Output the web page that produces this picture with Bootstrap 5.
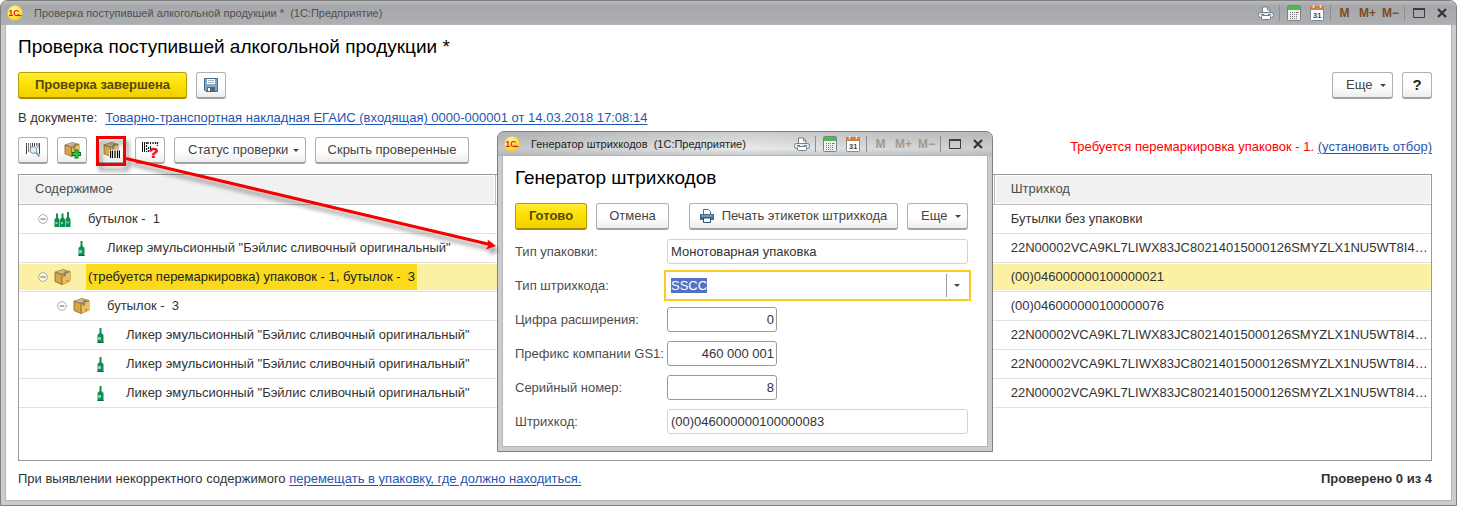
<!DOCTYPE html>
<html lang="ru">
<head>
<meta charset="utf-8">
<meta name="viewport" content="width=device-width, initial-scale=1">
<title>Проверка поступившей алкогольной продукции</title>
<link href="https://cdn.jsdelivr.net/npm/bootstrap@5.3.0/dist/css/bootstrap.min.css" rel="stylesheet">
<style>
  body { font-family: "Liberation Sans", Arial, sans-serif; font-size: 13px; line-height: 20px; color: #333; background: #fff; }
  a { color: #1f56b3; text-underline-offset: 2px; }
  svg { display: block; flex: none; }

  /* windows */
  .win { border: 1px solid #808080; border-radius: 7px 7px 0 0; background: #cbcccd; padding: 0 5px 5px; }
  .win-bar { height: 24px; margin: 0 -5px; padding: 0 3px 0 6px; border-radius: 6px 6px 0 0; background: linear-gradient(#b9babc, #a6a8ab 5px, #adafb2); font-size: 11px; color: #505050; }
  .win-bar .caption { margin-left: 11px; }
  .win-body { background: #fff; padding: 10px 19px 11px 12px; box-shadow: 0 0 0 1px #b4b5b6; }
  .win-title { font-size: 19px; line-height: 24px; color: #000; margin: 0 0 13px; font-weight: 400; }
  .tool { width: 23px; height: 22px; padding: 0; border: 0; background: none; display: flex; align-items: center; justify-content: center; font-size: 12px; font-weight: 700; color: #7d4a1e; }
  .bar-sep { width: 1px; height: 16px; margin: 0 2px; background: #8b8d90; }

  /* buttons */
  .btn-c { height: 27px; padding: 0; font-size: 13px; line-height: 20px; color: #444; border: 1px solid #b0b0b0; border-bottom: 2px solid #a2a2a2; border-radius: 3px; background: linear-gradient(#fff 55%, #ededed); display: inline-flex; align-items: center; justify-content: center; gap: 8px; white-space: nowrap; }
  .btn-main { font-weight: 700; color: #54490f; border-color: #b99f00; border-bottom-color: #a48d00; background: linear-gradient(#ffec33, #fddf00 50%, #f1d000); }
  .btn-drop { padding: 0 6px 0 13px; gap: 5px; justify-content: space-between; }
  .btn-more { width: 61px; }
  .btn-sq { width: 30px; }
  .btn-help { font-size: 15px; font-weight: 700; color: #222; }
  .caret { width: 0; height: 0; border: 3px solid transparent; border-top-color: #444; border-bottom: 0; }
  .gap-c { gap: 9px; }

  /* content tree */
  .grid-box { border: 1px solid #999; margin-top: 10px; }
  .tree { width: 100%; table-layout: fixed; border-collapse: separate; border-spacing: 0; }
  .tree th { height: 30px; padding: 0 16px 2px; font-weight: 400; color: #4d4d4d; background: #f1f1f1; border-bottom: 1px solid #bdbdbd; border-right: 1px solid #bdbdbd; box-shadow: inset 0 0 0 1px #fff; }
  .tree th:last-child { border-right: 0; }
  .tree td { height: 29px; padding: 0 16px; border-bottom: 1px solid #e0e0e0; white-space: nowrap; overflow: hidden; }
  .tree td:first-child { padding-left: 19px; }
  .tree .picked td { background: #fcf0a4; box-shadow: inset 0 1px #fff, inset 0 -1px #fff; }
  .node { display: flex; align-items: center; height: 26px; }
  .lvl-1 { margin-left: 19px; }
  .lvl-2 { margin-left: 38px; }
  .toggle { width: 10px; height: 10px; padding: 0; border: 0; background: none; margin-right: 6px; }
  .node-text { margin-left: 15px; padding: 3px 2px; white-space: pre; }
  .picked .node-text { background: #fbd91b; color: #222; }
  .warn { color: #f00; }

  /* generator dialog */
  .dialog { position: absolute; left: 497px; top: 131px; width: 496px; }
  .dialog .win-bar { color: #1e1e1e; background: linear-gradient(180deg, #a9abad88, #dcddde66 70%, #b0b2b4aa), linear-gradient(90deg, #b3b5b7, #f2f2f2 50%, #c3c4c6); }
  .dialog .tool-m { color: #a8978a; }
  .dialog .win-body { padding-bottom: 12px; }
  .fields { display: grid; grid-template-columns: 152px 1fr; row-gap: 9px; margin-top: 9px; align-items: center; }
  .fields label { color: #4d4d4d; white-space: nowrap; }
  .fld { height: 25px; width: 100%; padding: 0 3px; font-size: 13px; line-height: 15px; color: #333; border: 1px solid #999; border-radius: 3px; background: #fff; outline: 0; }
  .fld[readonly] { border-color: #d2d2d2; }
  .fld-num { width: 110px; text-align: right; padding-right: 2px; }
  .combo { margin: -3px; height: 31px; border: 2px solid #fbcb1d; display: flex; align-items: center; background: #fff; }
  .combo input { flex: 1; min-width: 0; border: 0; outline: 0; padding: 0 0 0 5px; color: #333; line-height: 15px; caret-color: transparent; }
  .combo input::selection { background: #5670c2; color: #fff; }
  .combo button { width: 23px; height: 23px; border: 0; border-left: 1px solid #999; background: none; padding: 0 3px 0 0; display: flex; align-items: center; justify-content: center; }
  .callout { position: absolute; left: 0; top: 0; pointer-events: none; }
</style>
</head>
<body>
<svg width="0" height="0" class="position-absolute" aria-hidden="true">
  <defs>
    <radialGradient id="sun" cx=".4" cy=".3" r=".8"><stop offset="0" stop-color="#fff9a0"/><stop offset=".6" stop-color="#ffe33c"/><stop offset="1" stop-color="#f0b92a"/></radialGradient>
    <symbol id="i-logo" viewBox="0 0 16 16"><circle cx="8" cy="8" r="7.6" fill="url(#sun)"/><text x="1.500" y="11" font-family="Liberation Sans" font-size="8.500" font-weight="700" fill="#e3211b">1С</text><path d="M9.500 10.500h5" stroke="#e3211b" stroke-width="1.200"/></symbol>
    <symbol id="i-print" viewBox="0 0 16 14"><path d="M4.500 7V1h5l2.500 2.500V7" fill="#fff" stroke="#6d7f8b"/><path d="M9.500 1v3H12" fill="none" stroke="#6d7f8b"/><rect x=".5" y="6.500" width="15" height="5" rx="2" fill="#e9eef1" stroke="#6d7f8b"/><rect x="3.500" y="9.500" width="9" height="4" rx="1" fill="#fff" stroke="#6d7f8b"/><path d="M3 8.500h3M10 8.500h3" stroke="#6d7f8b"/></symbol>
    <symbol id="i-calc" viewBox="0 0 14 16"><rect x=".5" y=".5" width="13" height="15" rx="1" fill="#f2f2f2" stroke="#7b8287"/><path d="M1 1h12v4H1z" fill="#4cbb4f"/><path d="M3 7.500h8M3 9.500h8M3 11.500h8M3 13.500h8" stroke="#777" stroke-dasharray="1 1"/><path d="M10 7.500h1.500" stroke="#e33"/></symbol>
    <symbol id="i-cal" viewBox="0 0 14 16"><rect x=".5" y="1.500" width="13" height="14" rx="1" fill="#fff" stroke="#7b8b96"/><path d="M0 1h14v4H0z" fill="#c9824a"/><path d="M3.500 0v3M10.500 0v3" stroke="#f7e3d2" stroke-width="1.500"/><text x="3" y="13" font-family="Liberation Sans" font-size="7.500" fill="#444">31</text></symbol>
    <symbol id="i-max" viewBox="0 0 12 10"><path d="M.5 1h11v8.500H.5z" fill="none" stroke="#3d3d3d"/><path d="M0 1h12" stroke="#3d3d3d" stroke-width="2"/></symbol>
    <symbol id="i-close" viewBox="0 0 10 10"><path d="M1 1l8 8M9 1L1 9" stroke="#333" stroke-width="2.200"/></symbol>
    <symbol id="i-save" viewBox="0 0 14 14"><path d="M.5.5h13v13H2L.5 12z" fill="#7fa8cc" stroke="#43698b"/><path d="M3 1h8v5H3z" fill="#fff"/><path d="M4 2.500h6M4 4.500h6" stroke="#a8b6c2"/><path d="M3 9h8v4.500H3z" fill="#5a646c"/><path d="M4 10h2v3H4z" fill="#fff"/></symbol>
    <symbol id="i-scan" viewBox="0 0 16 16"><path d="M1.500 1v11M7.500 1v5M9.500 1v3M14.500 1v11" stroke="#444"/><path d="M3.500 1v9M5.500 1v9M11.500 1v3M13 1v5" stroke="#777"/><circle cx="8.500" cy="8" r="3.500" fill="#d8eaf6" fill-opacity=".85" stroke="#7796ab"/><path d="M11 10.500l3.500 4" stroke="#8aa" stroke-width="2"/></symbol>
    <symbol id="i-box" viewBox="0 0 17 16"><path d="M1 3.200L9 .5l7 2v9.500L8 15.500 1 12.500z" fill="#dba63f" stroke="#7a6242" stroke-width=".8"/><path d="M1 3.200L9 .5l7 2-8 3z" fill="#cbb592"/><path d="M8 5.500l8-3V12l-8 3.500z" fill="#eec057"/><path d="M1 3.200l7 2.300 8-3M8 5.500v10" fill="none" stroke="#7a5a26" stroke-width=".8"/><path d="M9 1.200l2 .7-1.500 3v3.200l2.500-1V4l2-1.600z" fill="#8d8171"/><path d="M12.500 12l1.500-.6" stroke="#8c5f1d"/></symbol>
    <symbol id="i-boxadd" viewBox="0 0 17 17"><use href="#i-box" width="16" height="15"/><path d="M8 12h9M12.500 7.500v9" stroke="#0c7a1c" stroke-width="4"/><path d="M9 12h7M12.500 8.500v7" stroke="#35c443" stroke-width="2.200"/></symbol>
    <symbol id="i-boxcode" viewBox="0 0 17 17"><use href="#i-box" width="16" height="15"/><path d="M6 8h11v8H6z" fill="#fff"/><path d="M7.500 8.500V16M9.500 8.500V16M12 8.500V16M14.500 8.500V16M16.500 8.500V16" stroke="#000" stroke-width="1.200"/></symbol>
    <symbol id="i-codeq" viewBox="0 0 17 16"><path d="M.5 0v10M2.500 0v10M8.500 0v2M8.500 4v5" stroke="#111"/><path d="M4.500 0v10M6 0v3M6.500 5v5M11 0v3M13.500 0v2M15.500 0v4" stroke="#222" stroke-width="1.300" stroke-dasharray="2 1"/><text x="7" y="15.500" font-family="Liberation Sans" font-size="15.500" font-weight="700" fill="#f20d16" stroke="#f20d16" stroke-width=".6">?</text></symbol>
    <symbol id="i-printer" viewBox="0 0 14 14"><path d="M3.500 5V.5h5l2 2V5" fill="#fff" stroke="#4a6f8c"/><path d="M0 5h14v6H0z" fill="#476d8c"/><path d="M1.500 7h11" stroke="#a9c1d3"/><path d="M3.500 9h7v4.500h-7z" fill="#fff" stroke="#2f5069"/></symbol>
    <symbol id="i-bottle" viewBox="0 0 7 15"><path d="M2.500 0h2v5L6.500 7v8H.5V7l2-2z" fill="#0e8f52"/><path d="M1 9h3v3H1z" fill="#8ccdae"/><path d="M.5 14h6v1h-6z" fill="#086b3a"/></symbol>
    <symbol id="i-bottles" viewBox="0 0 16 15"><path d="M1.500 1.500h2v4L5 7.500V15H0V7.500l1.500-2zM7 1.500h2v4l1.500 2V15h-5V7.500l1.500-2zM12.500 0h2v5L16 7v8h-5V7l1.500-2z" fill="#0e8f52"/><path d="M1 10h2v2H1zM6.500 10h2v2h-2zM12 9.500h2v2h-2z" fill="#8ccdae"/></symbol>
    <symbol id="i-minus" viewBox="0 0 10 10"><circle cx="5" cy="5" r="4.400" fill="#fff" fill-opacity=".6" stroke="#999" stroke-width=".8"/><path d="M2.500 5h5" stroke="#666"/></symbol>
  </defs>
</svg>

<div class="win d-flex flex-column min-vh-100">
  <header class="win-bar d-flex align-items-center">
    <svg width="16" height="16"><use href="#i-logo"/></svg>
    <span class="caption me-auto">Проверка поступившей алкогольной продукции *&nbsp; (1С:Предприятие)</span>
    <button class="tool" aria-label="Печать"><svg width="16" height="14"><use href="#i-print"/></svg></button>
    <span class="bar-sep"></span>
    <button class="tool" aria-label="Калькулятор"><svg width="14" height="16"><use href="#i-calc"/></svg></button>
    <button class="tool" aria-label="Календарь"><svg width="14" height="16"><use href="#i-cal"/></svg></button>
    <span class="bar-sep"></span>
    <button class="tool tool-m">M</button>
    <button class="tool tool-m">M+</button>
    <button class="tool tool-m">M−</button>
    <span class="bar-sep"></span>
    <button class="tool" aria-label="Развернуть"><svg width="12" height="10"><use href="#i-max"/></svg></button>
    <button class="tool" aria-label="Закрыть"><svg width="10" height="10"><use href="#i-close"/></svg></button>
  </header>

  <main class="win-body flex-grow-1 d-flex flex-column">
    <h1 class="win-title">Проверка поступившей алкогольной продукции *</h1>
    <div class="d-flex gap-c">
      <button class="btn btn-c btn-main" style="width:169px">Проверка завершена</button>
      <button class="btn btn-c btn-sq me-auto" aria-label="Сохранить"><svg width="14" height="14"><use href="#i-save"/></svg></button>
      <button class="btn btn-c btn-drop btn-more">Еще <span class="caret"></span></button>
      <button class="btn btn-c btn-sq btn-help">?</button>
    </div>
    <div class="gap-2 d-flex" style="margin-top:9px">
      <span>В документе:</span>
      <a href="#">Товарно-транспортная накладная ЕГАИС (входящая) 0000-000001 от 14.03.2018 17:08:14</a>
    </div>
    <div class="d-flex gap-c" style="margin-top:9px">
      <button class="btn btn-c btn-sq" aria-label="Поиск по штрихкоду"><svg width="16" height="16"><use href="#i-scan"/></svg></button>
      <button class="btn btn-c btn-sq" aria-label="Добавить упаковку"><svg width="17" height="17"><use href="#i-boxadd"/></svg></button>
      <button class="btn btn-c btn-sq" aria-label="Генератор штрихкодов"><svg width="17" height="17"><use href="#i-boxcode"/></svg></button>
      <button class="btn btn-c btn-sq" aria-label="Неизвестный штрихкод"><svg width="17" height="16"><use href="#i-codeq"/></svg></button>
      <button class="btn btn-c btn-drop" style="width:132px">Статус проверки <span class="caret"></span></button>
      <button class="btn btn-c" style="width:154px">Скрыть проверенные</button>
      <span class="ms-auto warn">Требуется перемаркировка упаковок - 1. <a href="#">(установить отбор)</a></span>
    </div>

    <div class="grid-box flex-grow-1">
      <table class="tree">
        <colgroup><col style="width:33.8%"><col><col style="width:30.9%"></colgroup>
        <thead><tr><th>Содержимое</th><th></th><th>Штрихкод</th></tr></thead>
        <tbody>
          <tr><td><div class="node"><button class="toggle" aria-label="Свернуть"><svg width="10" height="10"><use href="#i-minus"/></svg></button><svg width="17" height="15"><use href="#i-bottles"/></svg><span class="node-text">бутылок -  1</span></div></td><td></td><td>Бутылки без упаковки</td></tr>
          <tr><td><div class="node lvl-1"><span class="toggle"></span><svg width="17" height="15"><use href="#i-bottle"/></svg><span class="node-text">Ликер эмульсионный "Бэйлис сливочный оригинальный"</span></div></td><td></td><td>22N00002VCA9KL7LIWX83JC80214015000126SMYZLX1NU5WT8I4…</td></tr>
          <tr class="picked"><td><div class="node"><button class="toggle" aria-label="Свернуть"><svg width="10" height="10"><use href="#i-minus"/></svg></button><svg width="17" height="16"><use href="#i-box"/></svg><span class="node-text">(требуется перемаркировка) упаковок - 1, бутылок -  3</span></div></td><td></td><td>(00)046000000100000021</td></tr>
          <tr><td><div class="node lvl-1"><button class="toggle" aria-label="Свернуть"><svg width="10" height="10"><use href="#i-minus"/></svg></button><svg width="17" height="16"><use href="#i-box"/></svg><span class="node-text">бутылок -  3</span></div></td><td></td><td>(00)046000000100000076</td></tr>
          <tr><td><div class="node lvl-2"><span class="toggle"></span><svg width="17" height="15"><use href="#i-bottle"/></svg><span class="node-text">Ликер эмульсионный "Бэйлис сливочный оригинальный"</span></div></td><td></td><td>22N00002VCA9KL7LIWX83JC80214015000126SMYZLX1NU5WT8I4…</td></tr>
          <tr><td><div class="node lvl-2"><span class="toggle"></span><svg width="17" height="15"><use href="#i-bottle"/></svg><span class="node-text">Ликер эмульсионный "Бэйлис сливочный оригинальный"</span></div></td><td></td><td>22N00002VCA9KL7LIWX83JC80214015000126SMYZLX1NU5WT8I4…</td></tr>
          <tr><td><div class="node lvl-2"><span class="toggle"></span><svg width="17" height="15"><use href="#i-bottle"/></svg><span class="node-text">Ликер эмульсионный "Бэйлис сливочный оригинальный"</span></div></td><td></td><td>22N00002VCA9KL7LIWX83JC80214015000126SMYZLX1NU5WT8I4…</td></tr>
        </tbody>
      </table>
    </div>

    <footer class="d-flex justify-content-between mt-2">
      <span>При выявлении некорректного содержимого <a href="#">перемещать в упаковку, где должно находиться.</a></span>
      <strong>Проверено 0 из 4</strong>
    </footer>
  </main>
</div>

<section class="win dialog" role="dialog" aria-label="Генератор штрихкодов">
  <header class="win-bar d-flex align-items-center">
    <svg width="16" height="16"><use href="#i-logo"/></svg>
    <span class="caption me-auto">Генератор штрихкодов&nbsp; (1С:Предприятие)</span>
    <button class="tool" aria-label="Печать"><svg width="16" height="14"><use href="#i-print"/></svg></button>
    <span class="bar-sep"></span>
    <button class="tool" aria-label="Калькулятор"><svg width="14" height="16"><use href="#i-calc"/></svg></button>
    <button class="tool" aria-label="Календарь"><svg width="14" height="16"><use href="#i-cal"/></svg></button>
    <span class="bar-sep"></span>
    <button class="tool tool-m">M</button>
    <button class="tool tool-m">M+</button>
    <button class="tool tool-m">M−</button>
    <span class="bar-sep"></span>
    <button class="tool" aria-label="Развернуть"><svg width="12" height="10"><use href="#i-max"/></svg></button>
    <button class="tool" aria-label="Закрыть"><svg width="10" height="10"><use href="#i-close"/></svg></button>
  </header>
  <div class="win-body">
    <h2 class="win-title">Генератор штрихкодов</h2>
    <div class="d-flex gap-c">
      <button class="btn btn-c btn-main" style="width:72px">Готово</button>
      <button class="btn btn-c me-auto" style="width:73px">Отмена</button>
      <button class="btn btn-c" style="width:209px"><svg width="14" height="14"><use href="#i-printer"/></svg>Печать этикеток штрихкода</button>
      <button class="btn btn-c btn-drop btn-more">Еще <span class="caret"></span></button>
    </div>
    <div class="fields">
      <label for="f-pack">Тип упаковки:</label><input id="f-pack" class="fld" readonly value="Монотоварная упаковка">
      <label for="f-kind">Тип штрихкода:</label>
      <div class="combo"><input id="f-kind" value="SSCC"><button aria-label="Выбрать"><span class="caret"></span></button></div>
      <label for="f-ext">Цифра расширения:</label><input id="f-ext" class="fld fld-num" value="0">
      <label for="f-gs">Префикс компании GS1:</label><input id="f-gs" class="fld fld-num" value="460 000 001">
      <label for="f-ser">Серийный номер:</label><input id="f-ser" class="fld fld-num" value="8">
      <label for="f-code">Штрихкод:</label><input id="f-code" class="fld" readonly value="(00)046000000100000083">
    </div>
  </div>
</section>

<svg class="callout" width="500" height="260" aria-hidden="true">
  <defs><filter id="soft" x="-10%" y="-20%" width="120%" height="150%"><feDropShadow dx="3" dy="5" stdDeviation="2" flood-color="#000" flood-opacity=".4"/></filter></defs>
  <g filter="url(#soft)" fill="none" stroke="#f50000" stroke-width="3">
    <rect x="97.500" y="137.500" width="27" height="27"/>
    <path d="M126 158.500L490 244.500"/>
    <path d="M496 246l-10 3.500 2.500-4.500-1-5.500z" fill="#f50000" stroke="none"/>
  </g>
</svg>

<script src="https://cdn.jsdelivr.net/npm/bootstrap@5.3.0/dist/js/bootstrap.bundle.min.js"></script>
<script>
  // The barcode type is ready to be typed over when the dialog opens.
  const kind = document.getElementById('f-kind');
  kind.focus();
  kind.select();
</script>
</body>
</html>
